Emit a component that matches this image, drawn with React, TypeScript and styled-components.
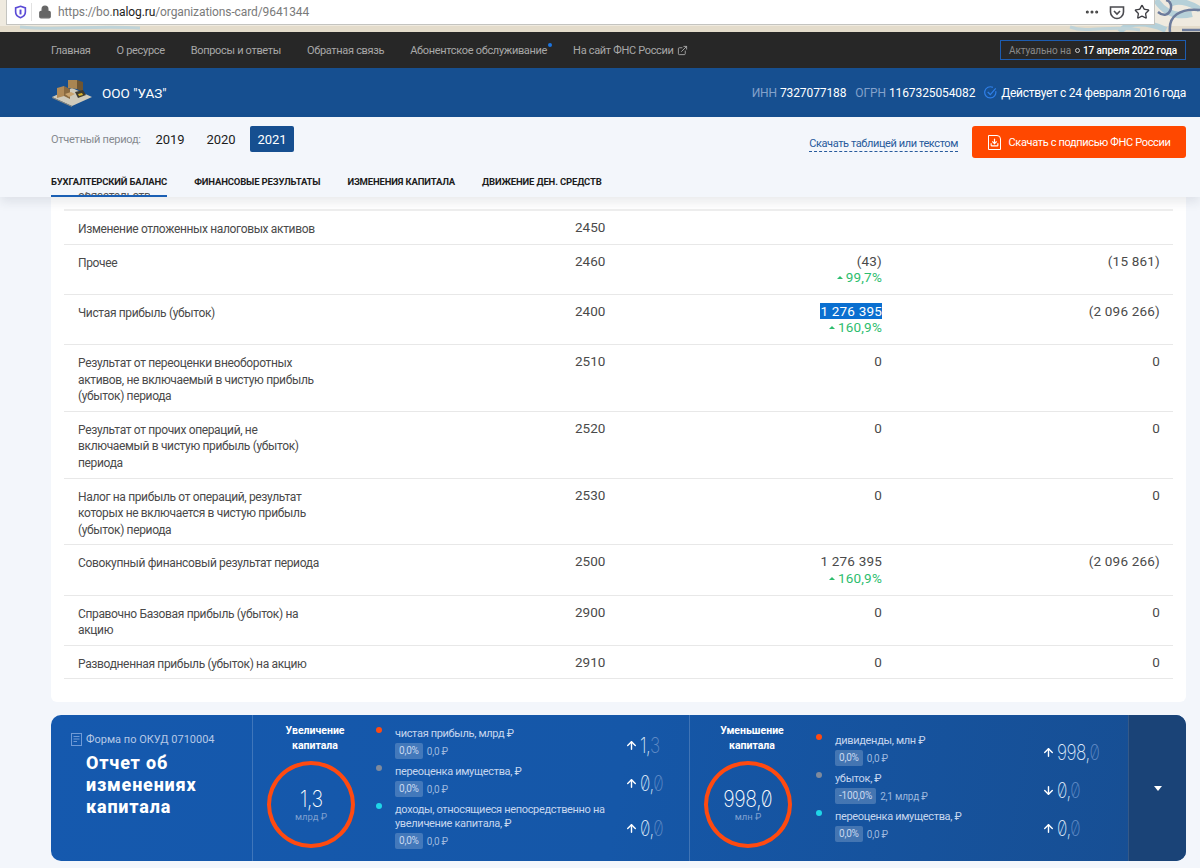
import React from "react";
import styled, { createGlobalStyle } from "styled-components";
import { ArrowDown, ArrowUp, Ellipsis, ExternalLink, Lock, Star, Download } from "lucide-react";

const navLinks = ["Главная", "О ресурсе", "Вопросы и ответы", "Обратная связь"];

type Row = { label: string; code: string; value?: string; change?: string; prev?: string; selected?: boolean };

const rows: Row[] = [
  { label: "Изменение отложенных налоговых активов", code: "2450" },
  { label: "Прочее", code: "2460", value: "(43)", change: "99,7%", prev: "(15 861)" },
  { label: "Чистая прибыль (убыток)", code: "2400", value: "1 276 395", change: "160,9%", prev: "(2 096 266)", selected: true },
  { label: "Результат от переоценки внеоборотных активов, не включаемый в чистую прибыль (убыток) периода", code: "2510", value: "0", prev: "0" },
  { label: "Результат от прочих операций, не включаемый в чистую прибыль (убыток) периода", code: "2520", value: "0", prev: "0" },
  { label: "Налог на прибыль от операций, результат которых не включается в чистую прибыль (убыток) периода", code: "2530", value: "0", prev: "0" },
  { label: "Совокупный финансовый результат периода", code: "2500", value: "1 276 395", change: "160,9%", prev: "(2 096 266)" },
  { label: "Справочно Базовая прибыль (убыток) на акцию", code: "2900", value: "0", prev: "0" },
  { label: "Разводненная прибыль (убыток) на акцию", code: "2910", value: "0", prev: "0" },
];

type Item = { color: string; text: string; pct: string; sum: string; up: boolean; whole: string; frac: string };

const increase: Item[] = [
  { color: "#ff4a10", text: "чистая прибыль, млрд ₽", pct: "0,0%", sum: "0,0 ₽", up: true, whole: "1,", frac: "3" },
  { color: "#7f8a9c", text: "переоценка имущества, ₽", pct: "0,0%", sum: "0,0 ₽", up: true, whole: "0,", frac: "0" },
  { color: "#1fd6e8", text: "доходы, относящиеся непосредственно на увеличение капитала, ₽", pct: "0,0%", sum: "0,0 ₽", up: true, whole: "0,", frac: "0" },
];

const decrease: Item[] = [
  { color: "#ff4a10", text: "дивиденды, млн ₽", pct: "0,0%", sum: "0,0 ₽", up: true, whole: "998,", frac: "0" },
  { color: "#7f8a9c", text: "убыток, ₽", pct: "-100,0%", sum: "2,1 млрд ₽", up: false, whole: "0,", frac: "0" },
  { color: "#1fd6e8", text: "переоценка имущества, ₽", pct: "0,0%", sum: "0,0 ₽", up: true, whole: "0,", frac: "0" },
];

const CapitalSection = ({ title, dial, unit, items, dialWidth, textWidth }: {
  title: [string, string]; dial: string; unit: string; items: Item[]; dialWidth: number; textWidth: number;
}) => (
  <Section $dialWidth={dialWidth}>
    <DialColumn>
      <DialTitle>{title[0]}<br />{title[1]}</DialTitle>
      <Dial>
        <DialValue>{dial}</DialValue>
        <DialUnit>{unit}</DialUnit>
      </Dial>
    </DialColumn>
    <ItemList>
      {items.map((item) => (
        <ItemRow key={item.text} $textWidth={textWidth}>
          <Dot $color={item.color} />
          <div>
            <ItemText>{item.text}</ItemText>
            <ItemMeta>
              <Pct>{item.pct}</Pct>
              <Sum>{item.sum}</Sum>
            </ItemMeta>
          </div>
          <ItemValue>
            {item.up ? <ArrowUp size={13} strokeWidth={2.6} /> : <ArrowDown size={13} strokeWidth={2.6} />}
            <Digits>{item.whole}<Frac>{item.frac}</Frac></Digits>
          </ItemValue>
        </ItemRow>
      ))}
    </ItemList>
  </Section>
);

const App = () => {
  return (
    <Page>
      <GlobalStyle />
      <Chrome>
        <Swirls viewBox="0 0 1200 32" preserveAspectRatio="none">
          <path d="M0 29 H1200" stroke="#e4dccb" strokeWidth="6" />
          <path d="M1120 32 C1128 20 1150 22 1166 30 M1156 0 C1164 12 1176 18 1192 14 M1170 4 C1180 -2 1196 6 1200 10" fill="none" stroke="#b6d0d8" strokeWidth="6" />
          <path d="M1170 32 C1168 16 1180 8 1200 10 M1158 12 C1170 22 1176 2 1166 0 M1182 30 H1200" fill="none" stroke="#6d7c9c" strokeWidth="2.5" />
          <path d="M20 27 C60 31 90 25 140 28 M1070 27 C1090 34 1110 24 1140 30" fill="none" stroke="#bfd3d8" strokeWidth="3" />
        </Swirls>
        <AddressBar>
          <ShieldIcon viewBox="0 0 16 16">
            <path d="M8 1 L14 3 V8 C14 11.5 11 14 8 15 C5 14 2 11.5 2 8 V3 Z" fill="none" stroke="#5b4bd6" strokeWidth="2" />
            <path d="M8 5 V11" stroke="#5b4bd6" strokeWidth="2.4" />
          </ShieldIcon>
          <BarDivider />
          <LockIcon size={14} fill="#666" strokeWidth={2} />
          <Url>https://bo.<b>nalog.ru</b>/organizations-card/9641344</Url>
          <BarTools>
            <Ellipsis size={16} color="#444" strokeWidth={2.6} />
            <svg width="16" height="15" viewBox="0 0 16 15">
              <path d="M1.5 2 H14.5 V7 C14.5 11 11 13.5 8 13.5 C5 13.5 1.5 11 1.5 7 Z" fill="none" stroke="#4a4a4f" strokeWidth="1.6" />
              <path d="M5 6 L8 9 L11 6" fill="none" stroke="#4a4a4f" strokeWidth="1.6" />
            </svg>
            <Star size={16} color="#3d3d42" strokeWidth={2} />
          </BarTools>
        </AddressBar>
      </Chrome>

      <TopNav>
        {navLinks.map((name) => (
          <NavLink key={name}>{name}</NavLink>
        ))}
        <NavLink>Абонентское обслуживание<NavDot /></NavLink>
        <NavLink>На сайт ФНС России <ExternalLink size={11} /></NavLink>
        <Actual>
          Актуально на <ActualRing /> <b>17 апреля 2022 года</b>
        </Actual>
      </TopNav>

      <CompanyBar>
        <svg width="42" height="28" viewBox="0 0 42 28">
          <polygon points="1,18 21,9 41,18 21,27" fill="#cfcabb" />
          <polygon points="1,18 21,27 21,28 1,19" fill="#8f8a7c" />
          <polygon points="6,9 13,7 13,17 6,19" fill="#b08a58" />
          <polygon points="13,7 19,10 19,20 13,17" fill="#8a6a40" />
          <polygon points="17,1 26,1 26,10 17,9" fill="#a98552" />
          <polygon points="26,1 32,3 32,13 26,10" fill="#6e5532" />
          <polygon points="14,15 20,13 24,15 18,18" fill="#c9a470" />
          <polygon points="24,13 32,11 35,16 27,19" fill="#3d3a30" />
          <polygon points="27,15 31,14 32,16 28,17" fill="#d8b32c" />
        </svg>
        <CompanyName>ООО "УАЗ"</CompanyName>
        <CompanyInfo>
          <span><Muted>ИНН</Muted> 7327077188</span>
          <span><Muted>ОГРН</Muted> 1167325054082</span>
          <Status>
            <svg width="13" height="13" viewBox="0 0 14 14">
              <path d="M12.6 5.5 A6 6 0 1 1 9.5 1.5" fill="none" stroke="#2f7fe8" strokeWidth="1.3" />
              <path d="M4 6.5 L6.8 9.2 L12.6 2.6" fill="none" stroke="#2f7fe8" strokeWidth="1.3" />
            </svg>
            <StatusText>Действует с 24 февраля 2016 года</StatusText>
          </Status>
        </CompanyInfo>
      </CompanyBar>

      <Controls>
        <ControlsTop>
          <PeriodLabel>Отчетный период:</PeriodLabel>
          <Year>2019</Year>
          <Year>2020</Year>
          <Year $active>2021</Year>
          <DownloadLink>Скачать таблицей или текстом</DownloadLink>
          <DownloadButton>
            <FileIcon>
              <Download size={9} strokeWidth={3} />
            </FileIcon>
            Скачать с подписью ФНС России
          </DownloadButton>
        </ControlsTop>
        <Tabs>
          <Tab $active>Бухгалтерский баланс</Tab>
          <Tab>Финансовые результаты</Tab>
          <Tab>Изменения капитала</Tab>
          <Tab>Движение ден. средств</Tab>
        </Tabs>
        <CutLabel>обязательств</CutLabel>
      </Controls>

      <Content>
        <Card>
          <TopSpacer />
          {rows.map((row) => (
            <TableRow key={row.code}>
              <Label>{row.label}</Label>
              <Code>{row.code}</Code>
              <Amount>
                {row.selected ? <Selected>{row.value}</Selected> : row.value}
                {row.change && <Change><Caret />{row.change}</Change>}
              </Amount>
              <Amount>{row.prev}</Amount>
            </TableRow>
          ))}
        </Card>

        <Summary>
          <SummaryHead>
            <FormLine>
              <svg width="11" height="13" viewBox="0 0 11 13">
                <rect x="0.5" y="0.5" width="10" height="12" fill="none" stroke="#6f9ad6" />
                <path d="M2.5 3.5 H8.5 M2.5 6 H8.5 M2.5 8.5 H6" stroke="#6f9ad6" />
              </svg>
              Форма по ОКУД 0710004
            </FormLine>
            <SummaryTitle>Отчет об изменениях капитала</SummaryTitle>
          </SummaryHead>
          <CapitalSection title={["Увеличение", "капитала"]} dial="1,3" unit="млрд ₽" items={increase} dialWidth={123} textWidth={230} />
          <CapitalSection title={["Уменьшение", "капитала"]} dial="998,0" unit="млн ₽" items={decrease} dialWidth={126} textWidth={207} />
          <Expand>
            <ExpandCaret />
          </Expand>
        </Summary>
      </Content>
    </Page>
  );
};

const GlobalStyle = createGlobalStyle`
  html, body {
    margin: 0;
    background: #f3f6fb;
  }
  body {
    font-family: "Roboto", "Noto Sans", sans-serif;
  }
`;

const Page = styled.div`
  width: 1200px;
  height: 868px;
  overflow: hidden;
  display: flex;
  flex-direction: column;
  background: #f3f6fb;
`;

const Chrome = styled.div`
  position: relative;
  height: 32px;
  flex: none;
  padding-left: 6px;
  background: #efeadf;
`;

const Swirls = styled.svg`
  position: absolute;
  inset: 0;
  width: 100%;
  height: 100%;
`;

const AddressBar = styled.div`
  position: relative;
  width: 1149px;
  height: 25px;
  box-sizing: border-box;
  display: flex;
  align-items: center;
  padding: 0 4px 0 7px;
  background: #fff;
  border: 1px solid #c4c4c0;
  border-top: none;
`;

const ShieldIcon = styled.svg`
  width: 13px;
  height: 14px;
`;

const BarDivider = styled.div`
  width: 1px;
  height: 18px;
  margin: 0 6px 0 4px;
  background: #e2e2e2;
`;

const LockIcon = styled(Lock)`
  color: #666;
`;

const Url = styled.div`
  margin-left: 6px;
  font-size: 12px;
  color: #7a7a7a;
  letter-spacing: -0.1px;

  b {
    font-weight: 400;
    color: #1c1c1c;
  }
`;

const BarTools = styled.div`
  margin-left: auto;
  display: flex;
  align-items: center;
  gap: 9px;
`;

const TopNav = styled.nav`
  height: 36px;
  flex: none;
  display: flex;
  align-items: center;
  gap: 26px;
  padding: 0 14px 0 51px;
  background: #272727;
`;

const NavLink = styled.span`
  position: relative;
  display: flex;
  align-items: center;
  gap: 3px;
  font-size: 11px;
  letter-spacing: -0.32px;
  color: #a8a8a8;
  white-space: nowrap;
`;

const NavDot = styled.i`
  position: absolute;
  top: -1px;
  right: -5px;
  width: 4px;
  height: 4px;
  border-radius: 50%;
  background: #1b74e0;
`;

const Actual = styled.div`
  margin-left: auto;
  width: 186px;
  height: 20px;
  box-sizing: border-box;
  display: flex;
  align-items: center;
  justify-content: center;
  gap: 3px;
  border: 1px solid #1d5cb0;
  font-size: 10px;
  letter-spacing: -0.1px;
  color: #8a8a8a;
  white-space: nowrap;

  b {
    font-weight: 500;
    color: #fff;
  }
`;

const ActualRing = styled.i`
  width: 5px;
  height: 5px;
  box-sizing: border-box;
  margin-left: 1px;
  border: 1px solid #ccc;
  border-radius: 50%;
`;

const CompanyBar = styled.header`
  height: 49px;
  flex: none;
  display: flex;
  align-items: center;
  padding: 0 14px 0 51px;
  background: #164f90;
  color: #fff;
`;

const CompanyName = styled.div`
  margin-left: 9px;
  font-size: 13.5px;
`;

const CompanyInfo = styled.div`
  margin-left: auto;
  display: flex;
  align-items: center;
  gap: 9px;
  font-size: 12px;
  letter-spacing: -0.1px;
`;

const Muted = styled.span`
  color: #84a2cb;
`;

const Status = styled.span`
  display: flex;
  align-items: center;
  gap: 4px;
`;

const StatusText = styled.span`
  letter-spacing: -0.3px;
`;

const Controls = styled.div`
  position: relative;
  z-index: 2;
  height: 80px;
  flex: none;
  box-sizing: border-box;
  padding: 9px 14px 0 51px;
  background: #f3f6fb;
  box-shadow: 0 5px 10px rgba(40, 50, 70, 0.1);
`;

const ControlsTop = styled.div`
  display: flex;
  align-items: flex-start;
  height: 32px;
`;

const PeriodLabel = styled.span`
  width: 97px;
  line-height: 28px;
  font-size: 11px;
  letter-spacing: -0.25px;
  color: #868a90;
`;

const Year = styled.span<{ $active?: boolean }>`
  width: 44px;
  height: 26px;
  margin-right: ${(p) => (p.$active ? 0 : "7px")};
  text-align: center;
  line-height: 27px;
  font-size: 13px;
  border-radius: 2px;
  color: ${(p) => (p.$active ? "#fff" : "#1c1c1c")};
  background: ${(p) => (p.$active ? "#164f90" : "transparent")};
`;

const DownloadLink = styled.span`
  margin: 11px 14px 0 auto;
  font-size: 11px;
  letter-spacing: -0.4px;
  line-height: 14px;
  color: #275a9c;
  border-bottom: 1px dashed #275a9c;
`;

const DownloadButton = styled.button`
  width: 214px;
  height: 32px;
  display: flex;
  align-items: center;
  justify-content: center;
  gap: 8px;
  padding: 0;
  border: none;
  border-radius: 3px;
  background: #ff4800;
  color: #fff;
  font-family: inherit;
  font-size: 11px;
  letter-spacing: -0.35px;
`;

const FileIcon = styled.span`
  width: 13px;
  height: 15px;
  box-sizing: border-box;
  display: flex;
  align-items: center;
  justify-content: center;
  border: 1.5px solid #fff;
  border-top-right-radius: 4px;
`;

const Tabs = styled.div`
  display: flex;
  gap: 27px;
  margin-top: 16px;
`;

const Tab = styled.span<{ $active?: boolean }>`
  position: relative;
  z-index: 1;
  height: 21px;
  line-height: 16px;
  font-size: 9.5px;
  font-weight: 700;
  letter-spacing: -0.15px;
  text-transform: uppercase;
  white-space: nowrap;
  color: #1c1c1c;
  border-bottom: 2px solid ${(p) => (p.$active ? "#1a5fb4" : "transparent")};
`;

const CutLabel = styled.span`
  position: absolute;
  left: 78px;
  bottom: 0;
  height: 5px;
  overflow: hidden;
  display: block;
  line-height: 8px;
  font-size: 12px;
  letter-spacing: -0.35px;
  color: #555;
`;

const Content = styled.main`
  flex: 1;
  padding: 0 14px 0 51px;
`;

const Card = styled.section`
  box-sizing: border-box;
  height: 505px;
  padding: 0 13px;
  background: #fff;
  border-radius: 0 0 6px 6px;
`;

const TopSpacer = styled.div`
  height: 12px;
  border-bottom: 2px solid #eeeeee;
`;

const TableRow = styled.div`
  display: grid;
  grid-template-columns: 497px 30px 277px 278px;
  padding: 8px 13px 6px 14px;
  border-bottom: 1px solid #e8e8e8;
  font-size: 13px;
  line-height: 16.6px;
  color: #4a4a4a;
`;

const Label = styled.div`
  max-width: 243px;
  padding-top: 2px;
  font-size: 12px;
  letter-spacing: -0.35px;
`;

const Code = styled.div`
  font-size: 13.5px;
`;

const Amount = styled.div`
  padding-bottom: 2px;
  font-size: 13.5px;
  text-align: right;
  letter-spacing: 0.2px;
`;

const Selected = styled.span`
  background: #0a6fd0;
  color: #fff;
`;

const Change = styled.div`
  display: flex;
  align-items: center;
  justify-content: flex-end;
  gap: 3px;
  color: #2dbd6e;
  line-height: 16.6px;
`;

const Caret = styled.i`
  width: 0;
  height: 0;
  border: 3px solid transparent;
  border-top: none;
  border-bottom: 3px solid #2dbd6e;
`;

const Summary = styled.section`
  height: 146px;
  margin-top: 13px;
  display: grid;
  grid-template-columns: 201px 437px 439px 58px;
  border-radius: 10px;
  overflow: hidden;
  color: #fff;
  background: linear-gradient(100deg, #1559ae 0%, #1557a8 50%, #174e92 100%);
`;

const SummaryHead = styled.div`
  padding: 18px 10px 0 20px;
`;

const FormLine = styled.div`
  display: flex;
  align-items: center;
  gap: 4px;
  font-size: 11px;
  color: #b5c8e6;
`;

const SummaryTitle = styled.h2`
  margin: 6px 0 0 15px;
  font-size: 18px;
  line-height: 22px;
  font-weight: 800;
  letter-spacing: 0.8px;
`;

const Section = styled.div<{ $dialWidth: number }>`
  display: grid;
  grid-template-columns: ${(p) => p.$dialWidth}px 1fr;
  border-left: 1px solid rgba(255, 255, 255, 0.18);
`;

const DialColumn = styled.div`
  padding: 8px 0 0 14px;
`;

const DialTitle = styled.div`
  width: 96px;
  text-align: center;
  font-size: 10.5px;
  line-height: 15px;
  font-weight: 700;
`;

const Dial = styled.div`
  width: 88px;
  height: 87px;
  box-sizing: border-box;
  margin-top: 8px;
  display: flex;
  flex-direction: column;
  align-items: center;
  justify-content: center;
  border: 4px solid #ff4a10;
  border-radius: 50%;
`;

const DialValue = styled.div`
  margin-top: 1px;
  font-family: "Inter", sans-serif;
  font-weight: 200;
  font-size: 23px;
  line-height: 22px;
  letter-spacing: -0.5px;
  font-feature-settings: "zero";
  transform: scaleX(0.85);
`;

const DialUnit = styled.div`
  margin-top: 2px;
  font-size: 9.5px;
  line-height: 10px;
  color: #7fa0d0;
`;

const ItemList = styled.div`
  display: flex;
  flex-direction: column;
  justify-content: center;
  gap: 6px;
`;

const ItemRow = styled.div<{ $textWidth: number }>`
  display: grid;
  grid-template-columns: 19px ${(p) => p.$textWidth}px 1fr;
  align-items: center;
`;

const Dot = styled.i<{ $color: string }>`
  align-self: start;
  width: 6px;
  height: 6px;
  border-radius: 50%;
  background: ${(p) => p.$color};
`;

const ItemText = styled.div`
  font-size: 11px;
  letter-spacing: -0.33px;
  line-height: 14px;
  color: #c6d6ee;
`;

const ItemMeta = styled.div`
  display: flex;
  align-items: center;
  gap: 4px;
  margin-top: 2px;
`;

const Pct = styled.span`
  padding: 0 4px;
  border-radius: 2px;
  background: rgba(255, 255, 255, 0.2);
  font-size: 10px;
  letter-spacing: -0.2px;
  line-height: 16px;
  color: #c9d8ef;
`;

const Sum = styled.span`
  font-size: 10px;
  letter-spacing: -0.2px;
  color: #9db8de;
`;

const ItemValue = styled.div`
  display: flex;
  align-items: center;
  gap: 2px;
  padding-top: 4px;
  color: #fff;
`;

const Digits = styled.span`
  transform: scaleX(0.78);
  transform-origin: left center;
  font-family: "Inter", sans-serif;
  font-weight: 200;
  font-size: 22px;
  white-space: nowrap;
  color: #dce7f7;
  letter-spacing: -0.6px;
  font-feature-settings: "zero";
`;

const Frac = styled.span`
  color: #5f8ac5;
`;

const Expand = styled.div`
  display: flex;
  align-items: center;
  justify-content: center;
  background: #1a4377;
  border-left: 1px solid rgba(255, 255, 255, 0.12);
`;

const ExpandCaret = styled.i`
  width: 0;
  height: 0;
  border: 4.5px solid transparent;
  border-bottom: none;
  border-top: 5px solid #fff;
`;

export default App;
